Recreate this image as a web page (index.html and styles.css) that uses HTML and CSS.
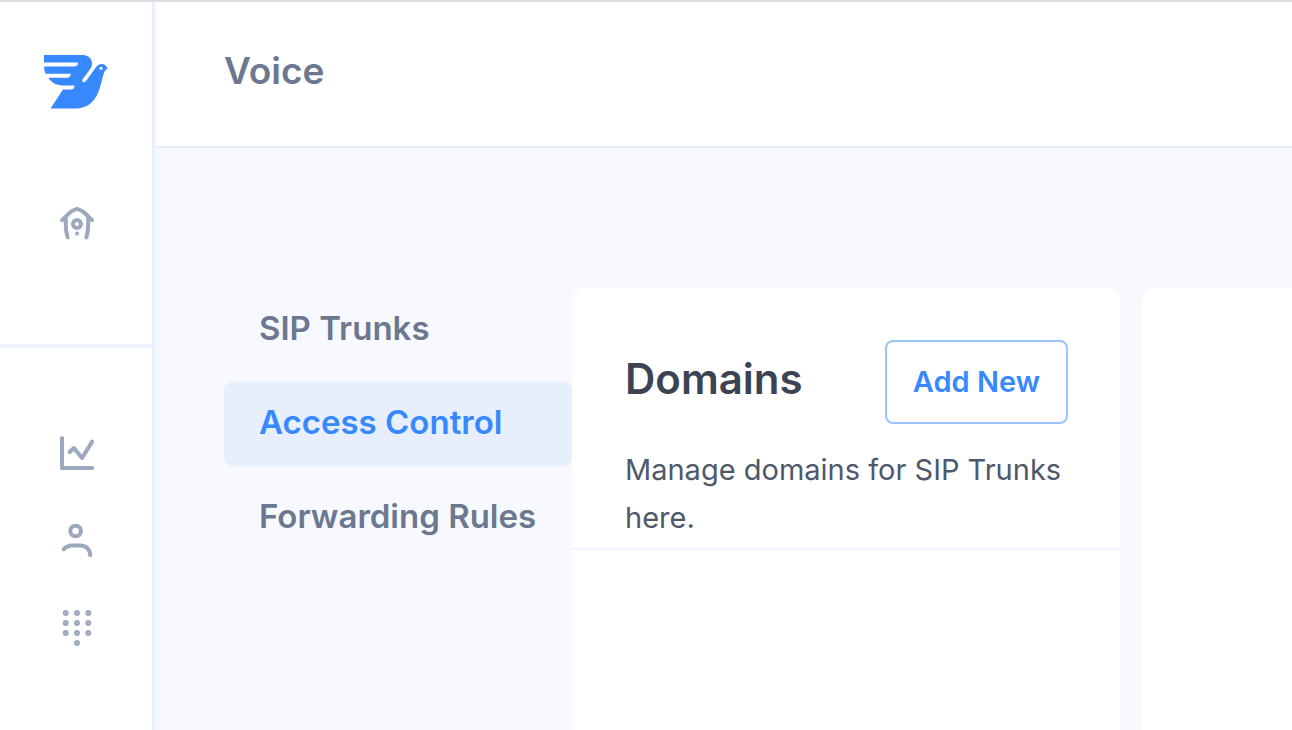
FILE: index.html
```html
<!DOCTYPE html>
<html lang="en">
	<head>
		<meta charset="UTF-8" />
		<meta name="viewport" content="width=device-width, initial-scale=1.0" />
		<title>Voice</title>
		<link rel="stylesheet" href="styles.css">
	</head>
	<body>
		<aside class="sidebar">
			<div class="sidebar-top">
				<a href="#" class="logo" aria-label="Home page">
					<svg width="64" height="54" viewBox="0 0 64 54">
						<path fill="#3888ff" d="M0 0H39C44.5 0 48 3.6 48 8.5C48 11.5 46.8 13.2 45.2 15.4L38.4 24.4C37.4 27 40.4 28.4 42 26L51 13.4C53 10.6 54.8 9 57.5 9C60.5 9 62.6 10.8 63.8 13.6C60.8 15.2 60 17.6 58.9 21.5C56.6 29.5 55.6 35.6 52.6 41C48 49 41 53.4 32.5 53.4H6.5L19 34.4H27.6C29.4 34.4 30.4 33.2 30.4 31.6V30.4H19C12 30.4 7 27 4.2 22.7H22.6C25.2 22.7 26.8 21.2 26.8 18.7H1.5C.6 16.5 .1 14 0 11.5H29.8C32.4 11.5 34.2 10 34.2 7.5H0Z"/>
						<circle cx="57" cy="13.2" r="1.5" fill="#fff"/>
					</svg>
				</a>
				<a href="#" class="icon" aria-label="Dashboard">
					<svg width="36" height="36" viewBox="0 0 36 36">
						<path d="M3 14.2L10.5 6.8C12.6 4.8 15.6 3.5 18 2.8C20.4 3.5 23.4 4.8 25.5 6.8L33 14.2M6.8 11.5V19C6.8 24 7.4 28 8.7 31.4M29.2 11.5V19C29.2 24 28.6 28 27.3 31.4"/>
						<circle cx="18" cy="18" r="4"/>
						<circle class="dot" cx="18" cy="27.4" r="2"/>
					</svg>
				</a>
			</div>
			<nav class="sidebar-nav" aria-label="Main">
				<a href="#" class="icon" aria-label="Analytics">
					<svg width="36" height="36" viewBox="0 0 36 36">
						<path d="M3 3V33H33.2M10.7 17L14.9 13L23 23L33.2 6.6"/>
					</svg>
				</a>
				<a href="#" class="icon" aria-label="Contacts">
					<svg width="36" height="36" viewBox="0 0 36 36">
						<circle cx="16.6" cy="9" r="5.3"/>
						<path d="M4.6 27.3C7 24.6 9.6 23.4 13 23.4H21C27 23.4 31 27 31.2 33.2"/>
					</svg>
				</a>
				<a href="#" class="icon dialpad" aria-label="Numbers">
					<svg width="36" height="38" viewBox="0 0 36 38">
						<circle cx="6.7" cy="4" r="2"/>
						<circle cx="18" cy="4" r="2"/>
						<circle cx="29.3" cy="4" r="2"/>
						<circle cx="6.7" cy="14" r="2"/>
						<circle cx="18" cy="14" r="2"/>
						<circle cx="29.3" cy="14" r="2"/>
						<circle cx="6.7" cy="24" r="2"/>
						<circle cx="18" cy="24" r="2"/>
						<circle cx="29.3" cy="24" r="2"/>
						<circle cx="18" cy="34" r="2"/>
					</svg>
				</a>
			</nav>
		</aside>

		<div class="page">
			<header class="header">
				<h1>Voice</h1>
			</header>
			<main class="content">
				<nav class="menu" aria-label="Voice">
					<a href="#">SIP Trunks</a>
					<a href="#" class="active">Access Control</a>
					<a href="#">Forwarding Rules</a>
				</nav>
				<section class="card">
					<div class="card-head">
						<div class="card-title">
							<h2>Domains</h2>
							<button type="button">Add New</button>
						</div>
						<p>Manage domains for SIP Trunks here.</p>
					</div>
				</section>
				<section class="card card-detail"></section>
			</main>
		</div>
	</body>
</html>
```
FILE: styles.css
```css
* {
	box-sizing: border-box;
}
body {
	display: flex;
	min-height: 100vh;
	margin: 0;
	border-top: 2px solid #dcdce1;
	background: #f8f9ff;
	font-family: Inter, "Liberation Sans", sans-serif;
}
h1, h2, p {
	margin: 0;
}
a {
	text-decoration: none;
}
svg {
	display: block;
}

.sidebar {
	flex: none;
	width: 154px;
	border-right: 2px solid #e5eeff;
	background: #fff;
	box-shadow: 0 0 8px #e9f1ff;
	position: relative;
}
.sidebar-top {
	display: flex;
	flex-direction: column;
	align-items: center;
	gap: 97px;
	padding: 53px 0 102px;
	border-bottom: 4px solid #edf2fc;
}
.sidebar-nav {
	display: flex;
	flex-direction: column;
	align-items: center;
	gap: 51px;
	padding-top: 87px;
}
.icon {
	padding-left: 2px;
}
.icon svg {
	fill: none;
	stroke: #9ba8bd;
	stroke-width: 4;
	stroke-linecap: round;
	stroke-linejoin: round;
}
.icon .dot {
	fill: #9ba8bd;
	stroke: none;
}
.dialpad svg {
	fill: #b0bbcd;
	stroke-width: 2;
}

.page {
	flex: 1;
	min-width: 0;
	display: flex;
	flex-direction: column;
}
.header {
	padding: 45px 70px 51px;
	border-bottom: 2px solid #e9eefb;
	background: #fff;
}
h1 {
	color: #6b7890;
	font-size: 37px;
	font-weight: 600;
	line-height: 48px;
}

.content {
	flex: 1;
	display: flex;
	padding: 140px 0 0 70px;
}
.menu {
	flex: none;
	display: flex;
	flex-direction: column;
	gap: 10px;
	width: 348px;
}
.menu a {
	padding: 18px 35px 22px;
	border-radius: 8px;
	color: #6b7890;
	font-size: 33px;
	font-weight: 600;
	line-height: 44px;
	white-space: nowrap;
}
.menu .active {
	background: #e7eefc;
	color: #3888ff;
}

.card {
	flex: none;
	width: 548px;
	border-radius: 12px 12px 0 0;
	background: #fff;
}
.card-detail {
	flex: 1;
	margin-left: 22px;
	border-radius: 12px 0 0 0;
}
.card-head {
	padding: 52px 52px 6px 53px;
	border-bottom: 2px solid #eef4ff;
}
.card-title {
	display: flex;
	align-items: flex-start;
	justify-content: space-between;
	margin-bottom: 22px;
}
h2 {
	color: #3c4454;
	font-size: 42px;
	font-weight: 600;
	line-height: 78px;
}
button {
	padding: 18px 26px;
	border: 2px solid #9ac3ff;
	border-radius: 8px;
	background: #fff;
	color: #3888ff;
	font-family: inherit;
	font-size: 29px;
	font-weight: 600;
	line-height: 44px;
	cursor: pointer;
}
.card-head p {
	color: #4e586b;
	font-size: 29px;
	line-height: 48px;
}
```
